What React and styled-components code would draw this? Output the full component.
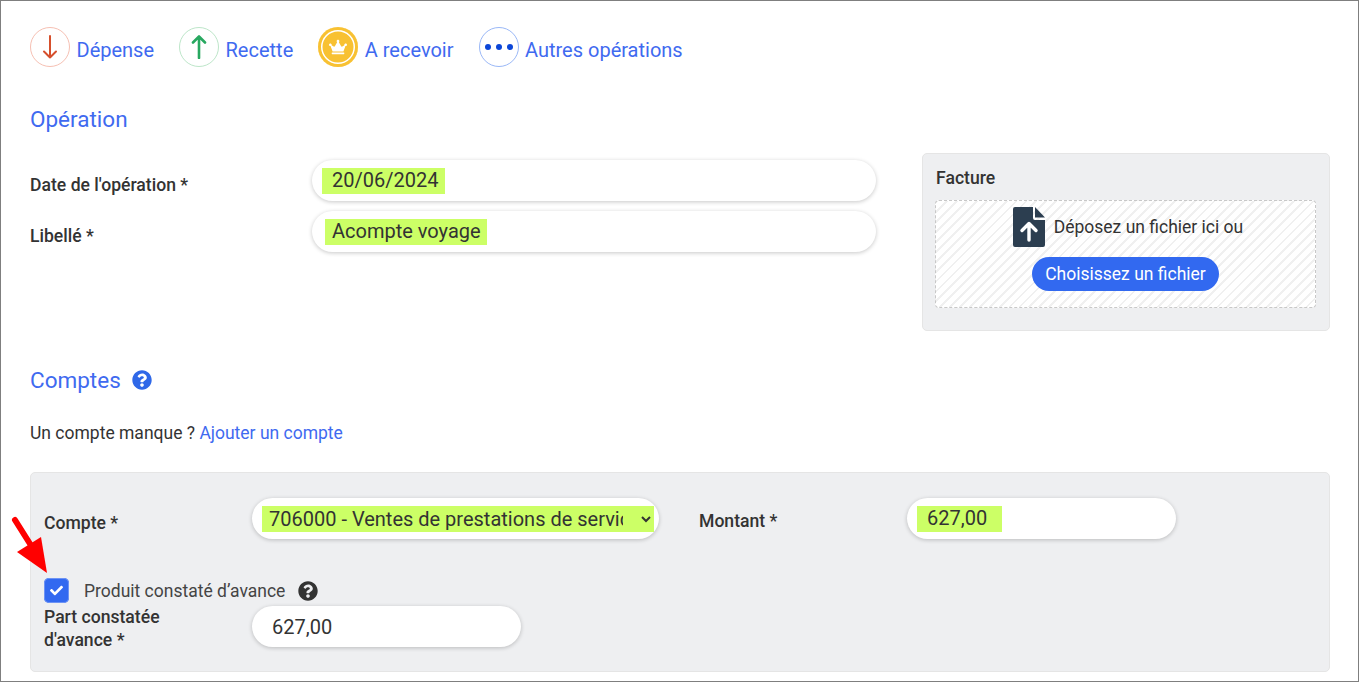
import React from 'react'
import styled, { createGlobalStyle } from 'styled-components'
import { FaCheck, FaCrown, FaQuestionCircle } from 'react-icons/fa'

const GlobalStyle = createGlobalStyle`
  html, body {
    margin: 0;
    padding: 0;
    background: #fff;
  }
  body {
    font-family: Roboto, "Liberation Sans", sans-serif;
    color: #333;
  }
`

const Page = styled.div`
  position: relative;
  box-sizing: border-box;
  width: 1359px;
  height: 682px;
  padding: 26px 28px 0 29px;
  border: 1px solid #7f7f7f;
  overflow: hidden;
`
const Nav = styled.nav`
  display: flex;
  align-items: center;
  height: 40px;
`
const NavItem = styled.a`
  display: flex;
  align-items: center;
  gap: 6.5px;
  margin-right: ${(p) => p.$gap}px;
  font-size: 20px;
  color: #3f6af0;
`
const NavText = styled.span`
  padding-top: 6px;
`
const Round = styled.span`
  box-sizing: border-box;
  display: flex;
  align-items: center;
  justify-content: center;
  width: 40px;
  height: 40px;
  border-radius: 50%;
  border: 1.5px solid ${(p) => p.$line};
`
const GoldRound = styled.span`
  box-sizing: border-box;
  display: flex;
  align-items: center;
  justify-content: center;
  width: 40px;
  height: 40px;
  border-radius: 50%;
  background: #f8c132;
  box-shadow: inset 0 0 0 3px #f8c132, inset 0 0 0 4.5px #fff;
  color: #fff;
  font-size: 18px;
`
const Heading = styled.h2`
  display: flex;
  align-items: center;
  gap: 11px;
  margin: ${(p) => p.$top}px 0 0;
  height: 28px;
  font-size: 22.5px;
  font-weight: 400;
  color: #3f6af0;
`
const OperationRow = styled.div`
  display: flex;
  justify-content: space-between;
  margin-top: 20px;
`
const Fields = styled.div`
  display: flex;
  flex-direction: column;
  gap: 10px;
  padding-top: 7px;
`
const Row = styled.div`
  display: flex;
  align-items: center;
`
const Label = styled.label`
  flex: none;
  width: ${(p) => p.$width}px;
  margin-top: ${(p) => p.$drop || 0}px;
  font-size: 17.6px;
  font-weight: 500;
  line-height: 23px;
  color: #333;
`
const Pill = styled.div`
  box-sizing: border-box;
  display: flex;
  align-items: center;
  width: ${(p) => p.$width}px;
  height: 41px;
  padding: 0 10px;
  border-radius: 21px;
  background: #fff;
  box-shadow: 0 1px 4px rgba(0, 0, 0, 0.22);
  font-size: 20px;
  color: #333;
`
const Marked = styled.span`
  height: 26px;
  line-height: 25px;
  padding: 0 ${(p) => p.$right}px 0 ${(p) => p.$left}px;
  margin-left: ${(p) => p.$offset || 0}px;
  background: #ccff66;
`
const PlainValue = styled.span`
  padding: 1px 0 0 10px;
`
const UploadCard = styled.section`
  box-sizing: border-box;
  width: 408px;
  height: 178px;
  padding: 14px 13px 0;
  border: 1px solid #e5e5e5;
  border-radius: 5px;
  background: #eeeff1;
`
const CardTitle = styled.div`
  font-size: 17.6px;
  font-weight: 500;
  line-height: 21px;
  color: #333;
`
const DropZone = styled.div`
  box-sizing: border-box;
  display: flex;
  flex-direction: column;
  align-items: center;
  height: 108px;
  margin-top: 11px;
  margin-left: -1px;
  padding-top: 6px;
  border: 1px dashed #c8c8c8;
  border-radius: 4px;
  background: repeating-linear-gradient(-45deg, #fff, #fff 5px, #f0f0f0 5px, #f0f0f0 7px);
`
const DropHint = styled.div`
  display: flex;
  align-items: center;
  gap: 9px;
  margin-left: 5px;
  font-size: 17.5px;
  color: #333;
`
const ChooseButton = styled.button`
  height: 34px;
  margin-top: 10px;
  padding: 0 13px;
  border: 0;
  border-radius: 17px;
  background: #3269f0;
  color: #fff;
  font-family: inherit;
  font-size: 17.5px;
  font-weight: 400;
`
const HelpBlue = styled(FaQuestionCircle)`
  width: 20px;
  height: 20px;
  color: #2f68e8;
`
const HelpDark = styled(FaQuestionCircle)`
  width: 20px;
  height: 20px;
  color: #333;
`
const Missing = styled.p`
  margin: 27px 0 0;
  font-size: 17.5px;
  line-height: 24px;
  color: #333;
`
const Link = styled.a`
  color: #3f6af0;
`
const AccountPanel = styled.section`
  box-sizing: border-box;
  height: 200px;
  margin-top: 27px;
  padding: 25px 13px 0;
  border: 1px solid #e5e5e5;
  border-radius: 5px;
  background: #eeeff1;
`
const SelectPill = styled(Pill)`
  padding: 0 5px 0 10px;
  margin-right: 40px;
`
const AccountSelect = styled.select`
  width: 100%;
  height: 26px;
  padding: 0 15px 0 3px;
  border: 0;
  outline: 0;
  background: #ccff66;
  color: #333;
  font-family: inherit;
  font-size: 20px;
`
const CheckRow = styled.div`
  display: flex;
  align-items: center;
  margin-top: 39px;
  font-size: 17.5px;
  color: #444;
`
const CheckBox = styled.span`
  display: flex;
  align-items: center;
  justify-content: center;
  width: 25px;
  height: 25px;
  margin-right: 15px;
  border-radius: 5px;
  background: #3269f0;
  box-shadow: 0 0 0 1px #6d93f5 inset;
  color: #fff;
  font-size: 13px;
`
const CheckText = styled.span`
  padding-top: 1px;
  margin-right: 13px;
`
const PartRow = styled(Row)`
  align-items: flex-start;
  margin-top: 3px;
`
const Pointer = styled.svg`
  position: absolute;
  left: 9px;
  top: 515px;
  width: 40px;
  height: 60px;
`
const FileGlyph = styled.svg`
  width: 32px;
  height: 40px;
`

function ArrowGlyph({ color, up, weight }) {
  return (
    <svg width="16" height="24" viewBox="0 0 16 24" fill="none" stroke={color} strokeWidth={weight} strokeLinecap="round" strokeLinejoin="round" style={{ transform: up ? 'none' : 'rotate(180deg)' }}>
      <path d="M8 23V1.5M2 7.5L8 1.5l6 6" />
    </svg>
  )
}

function DotsGlyph() {
  return (
    <svg width="30" height="8" viewBox="0 0 30 8" fill="#0b46d8">
      <circle cx="4" cy="4" r="3" />
      <circle cx="15" cy="4" r="3" />
      <circle cx="26" cy="4" r="3" />
    </svg>
  )
}

function UploadGlyph() {
  return (
    <FileGlyph viewBox="0 0 32 40">
      <path fill="#2c3e50" d="M2 0H20V11a2 2 0 0 0 2 2H32V38a2 2 0 0 1-2 2H2a2 2 0 0 1-2-2V2a2 2 0 0 1 2-2z" />
      <path fill="#2c3e50" d="M22 0l10 10.5H22z" />
      <path fill="none" stroke="#fff" strokeWidth="3.4" strokeLinecap="round" strokeLinejoin="round" d="M16 33V17M9 23.5L16 16.5l7 7" />
    </FileGlyph>
  )
}

export default function App() {
  return (
    <>
      <GlobalStyle />
      <Page>
        <Nav>
          <NavItem $gap={25}>
            <Round $line="#f6c0b3"><ArrowGlyph color="#d64f2c" weight={2} /></Round>
            <NavText>Dépense</NavText>
          </NavItem>
          <NavItem $gap={25}>
            <Round $line="#bde6c9"><ArrowGlyph color="#28a860" weight={2.6} up /></Round>
            <NavText>Recette</NavText>
          </NavItem>
          <NavItem $gap={25}>
            <GoldRound><FaCrown /></GoldRound>
            <NavText>A recevoir</NavText>
          </NavItem>
          <NavItem $gap={0}>
            <Round $line="#9ab8f7"><DotsGlyph /></Round>
            <NavText>Autres opérations</NavText>
          </NavItem>
        </Nav>

        <Heading $top={38}>Opération</Heading>

        <OperationRow>
          <Fields>
            <Row>
              <Label $width={282} $drop={10}>Date de l'opération *</Label>
              <Pill $width={564}>
                <Marked $left={10} $right={7}>20/06/2024</Marked>
              </Pill>
            </Row>
            <Row>
              <Label $width={282} $drop={10}>Libellé *</Label>
              <Pill $width={564}>
                <Marked $left={7} $right={6} $offset={3}>Acompte voyage</Marked>
              </Pill>
            </Row>
          </Fields>
          <UploadCard>
            <CardTitle>Facture</CardTitle>
            <DropZone>
              <DropHint>
                <UploadGlyph />
                Déposez un fichier ici ou
              </DropHint>
              <ChooseButton>Choisissez un fichier</ChooseButton>
            </DropZone>
          </UploadCard>
        </OperationRow>

        <Heading $top={35}>Comptes <HelpBlue /></Heading>

        <Missing>
          Un compte manque ? <Link>Ajouter un compte</Link>
        </Missing>

        <AccountPanel>
          <Row>
            <Label $width={208} $drop={10}>Compte *</Label>
            <SelectPill $width={407}>
              <AccountSelect defaultValue="706000">
                <option value="706000">706000 - Ventes de prestations de services</option>
              </AccountSelect>
            </SelectPill>
            <Label $width={208} $drop={6}>Montant *</Label>
            <Pill $width={269}>
              <Marked $left={10} $right={15}>627,00</Marked>
            </Pill>
          </Row>
          <CheckRow>
            <CheckBox><FaCheck /></CheckBox>
            <CheckText>Produit constaté d’avance</CheckText>
            <HelpDark />
          </CheckRow>
          <PartRow>
            <Label $width={208}>Part constatée<br />d'avance *</Label>
            <Pill $width={269}>
              <PlainValue>627,00</PlainValue>
            </Pill>
          </PartRow>
        </AccountPanel>

        <Pointer viewBox="0 0 40 60">
          <path d="M5 4L22 31" stroke="#ff0000" strokeWidth="6" strokeLinecap="round" />
          <polygon points="7,36 31,21 37,57" fill="#ff0000" />
        </Pointer>
      </Page>
    </>
  )
}
